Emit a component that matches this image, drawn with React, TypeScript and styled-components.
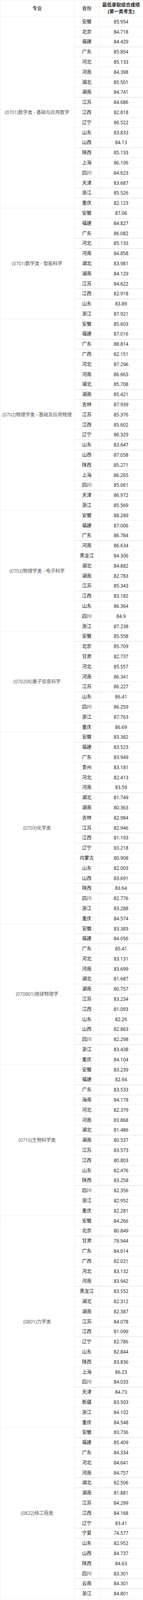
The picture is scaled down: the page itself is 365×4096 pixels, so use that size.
import React from "react";
import styled, { createGlobalStyle } from "styled-components";

const GlobalStyle = createGlobalStyle`
  html, body {
    margin: 0;
    padding: 0;
    background: #ffffff;
  }
  body {
    font-family: "Open Sans", "Noto Sans CJK SC", sans-serif;
  }
`;

type Group = { name: string; rows: string };

const groups: Group[] = [
  {
    name: "(0701)数学类 - 基础与应用数学",
    rows:
      "安徽 85.954,北京 84.718,福建 84.429,广东 85.854,河北 85.133,河南 84.398,湖北 85.501,湖南 84.741,江苏 84.686,江西 82.818,辽宁 86.522,山东 83.833,山西 84.13,陕西 85.133,上海 86.106,四川 84.623,天津 83.687,浙江 85.526,重庆 82.123",
  },
  {
    name: "(0701)数学类 - 智能科学",
    rows:
      "安徽 87.06,福建 84.827,广东 86.082,河北 85.133,河南 84.858,湖北 83.981,湖南 84.129,江苏 84.622,江西 82.918,山东 83.89,浙江 87.921",
  },
  {
    name: "(0702)物理学类 - 基础及应用物理",
    rows:
      "安徽 85.603,福建 87.016,广东 88.814,广西 82.151,河北 87.296,河南 86.663,湖北 85.708,湖南 85.421,吉林 87.939,江苏 85.376,江西 85.602,辽宁 86.329,山东 83.647,山西 87.058,陕西 85.271,上海 86.265,四川 85.061,天津 86.972,浙江 85.569",
  },
  {
    name: "(0702)物理学类 - 电子科学",
    rows:
      "安徽 88.289,福建 87.006,广东 86.784,河南 86.634,黑龙江 84.306,湖北 84.882,湖南 82.783,江苏 85.343,江西 83.182,山东 86.364,四川 84.9,浙江 87.238",
  },
  {
    name: "(070206)量子信息科学",
    rows:
      "安徽 85.558,北京 85.709,甘肃 82.737,河北 85.557,河南 86.341,江苏 86.227,山东 86.41,四川 86.259,浙江 87.763,重庆 86.69",
  },
  {
    name: "(0703)化学类",
    rows:
      "安徽 83.382,福建 83.523,广东 83.949,贵州 83.181,河北 82.413,河南 83.59,湖北 81.749,湖南 80.363,吉林 82.984,江苏 82.946,江西 81.193,辽宁 83.218,内蒙古 80.908,山东 82.003,山西 83.691,陕西 83.64,四川 82.776,浙江 83.288,重庆 84.574",
  },
  {
    name: "(070801)地球物理学",
    rows:
      "安徽 83.383,福建 84.056,广东 85.41,河北 83.131,河南 83.699,湖北 81.687,湖南 80.757,江苏 83.234,江西 81.093,山东 82.26,山西 82.863,四川 82.298,浙江 83.438,重庆 84.104",
  },
  {
    name: "(0710)生物科学类",
    rows:
      "安徽 83.239,福建 82.94,广东 83.533,海南 84.178,河北 82.379,河南 83.868,湖北 81.486,湖南 80.537,江苏 83.573,江西 80.803,山东 82.476,陕西 83.258,四川 82.356,浙江 82.952,重庆 82.281",
  },
  {
    name: "(0801)力学类",
    rows:
      "安徽 84.266,北京 80.849,甘肃 78.944,广东 84.614,广西 82.021,河北 83.132,河南 83.942,黑龙江 83.552,湖北 82.312,湖南 82.387,江苏 84.078,江西 81.099,辽宁 82.786,山东 82.844,陕西 83.836,上海 86.23,四川 84.033,天津 84.73,新疆 83.503,浙江 84.102,重庆 84.548",
  },
  {
    name: "(0822)核工程类",
    rows:
      "安徽 83.736,福建 85.409,广东 84.334,河北 84.641,河南 84.757,湖北 82.506,湖南 81.881,江苏 84.299,江西 84.168,辽宁 83.41,宁夏 74.577,山东 82.952,山西 84.737,陕西 84.63,四川 83.301,云南 84.301,浙江 84.801",
  },
];

const Page = styled.div`
  width: 365px;
  background: #ffffff;
`;

const Table = styled.div`
  display: grid;
  grid-template-columns: 188px 63px 1fr;
  grid-template-rows: 41.3px;
  grid-auto-rows: 24.5px;
  gap: 1.3px;
  padding: 0.65px;
  background: #ececec;
  width: 364.4px;
  box-sizing: border-box;
`;

const Cell = styled.div<{ $col: number }>`
  grid-column: ${(p) => p.$col};
  background: #ffffff;
  display: flex;
  align-items: center;
  justify-content: center;
  text-align: center;
  font-size: 12px;
  line-height: 17.4px;
  white-space: nowrap;
`;

const HeadCell = styled(Cell)<{ $dark?: boolean }>`
  font-weight: 700;
  color: ${(p) => (p.$dark ? "#222222" : "#555555")};
`;

const MajorCell = styled(Cell)<{ $span: number }>`
  grid-row: span ${(p) => p.$span};
  color: #555555;
  padding: 0 2px;
`;

const DataCell = styled(Cell)`
  color: #111111;
`;

export default function App() {
  return (
    <Page>
      <GlobalStyle />
      <Table>
        <HeadCell $col={1}>专业</HeadCell>
        <HeadCell $col={2}>省份</HeadCell>
        <HeadCell $col={3} $dark>
          最低录取综合成绩
          <br />
          (第一类考生)
        </HeadCell>
        {groups.map((g) => {
          const rows = g.rows.split(",").map((r) => r.split(" "));
          return (
            <React.Fragment key={g.name}>
              <MajorCell $col={1} $span={rows.length}>
                {g.name}
              </MajorCell>
              {rows.map(([prov, score], i) => (
                <React.Fragment key={i}>
                  <DataCell $col={2}>{prov}</DataCell>
                  <DataCell $col={3}>{score}</DataCell>
                </React.Fragment>
              ))}
            </React.Fragment>
          );
        })}
      </Table>
    </Page>
  );
}
